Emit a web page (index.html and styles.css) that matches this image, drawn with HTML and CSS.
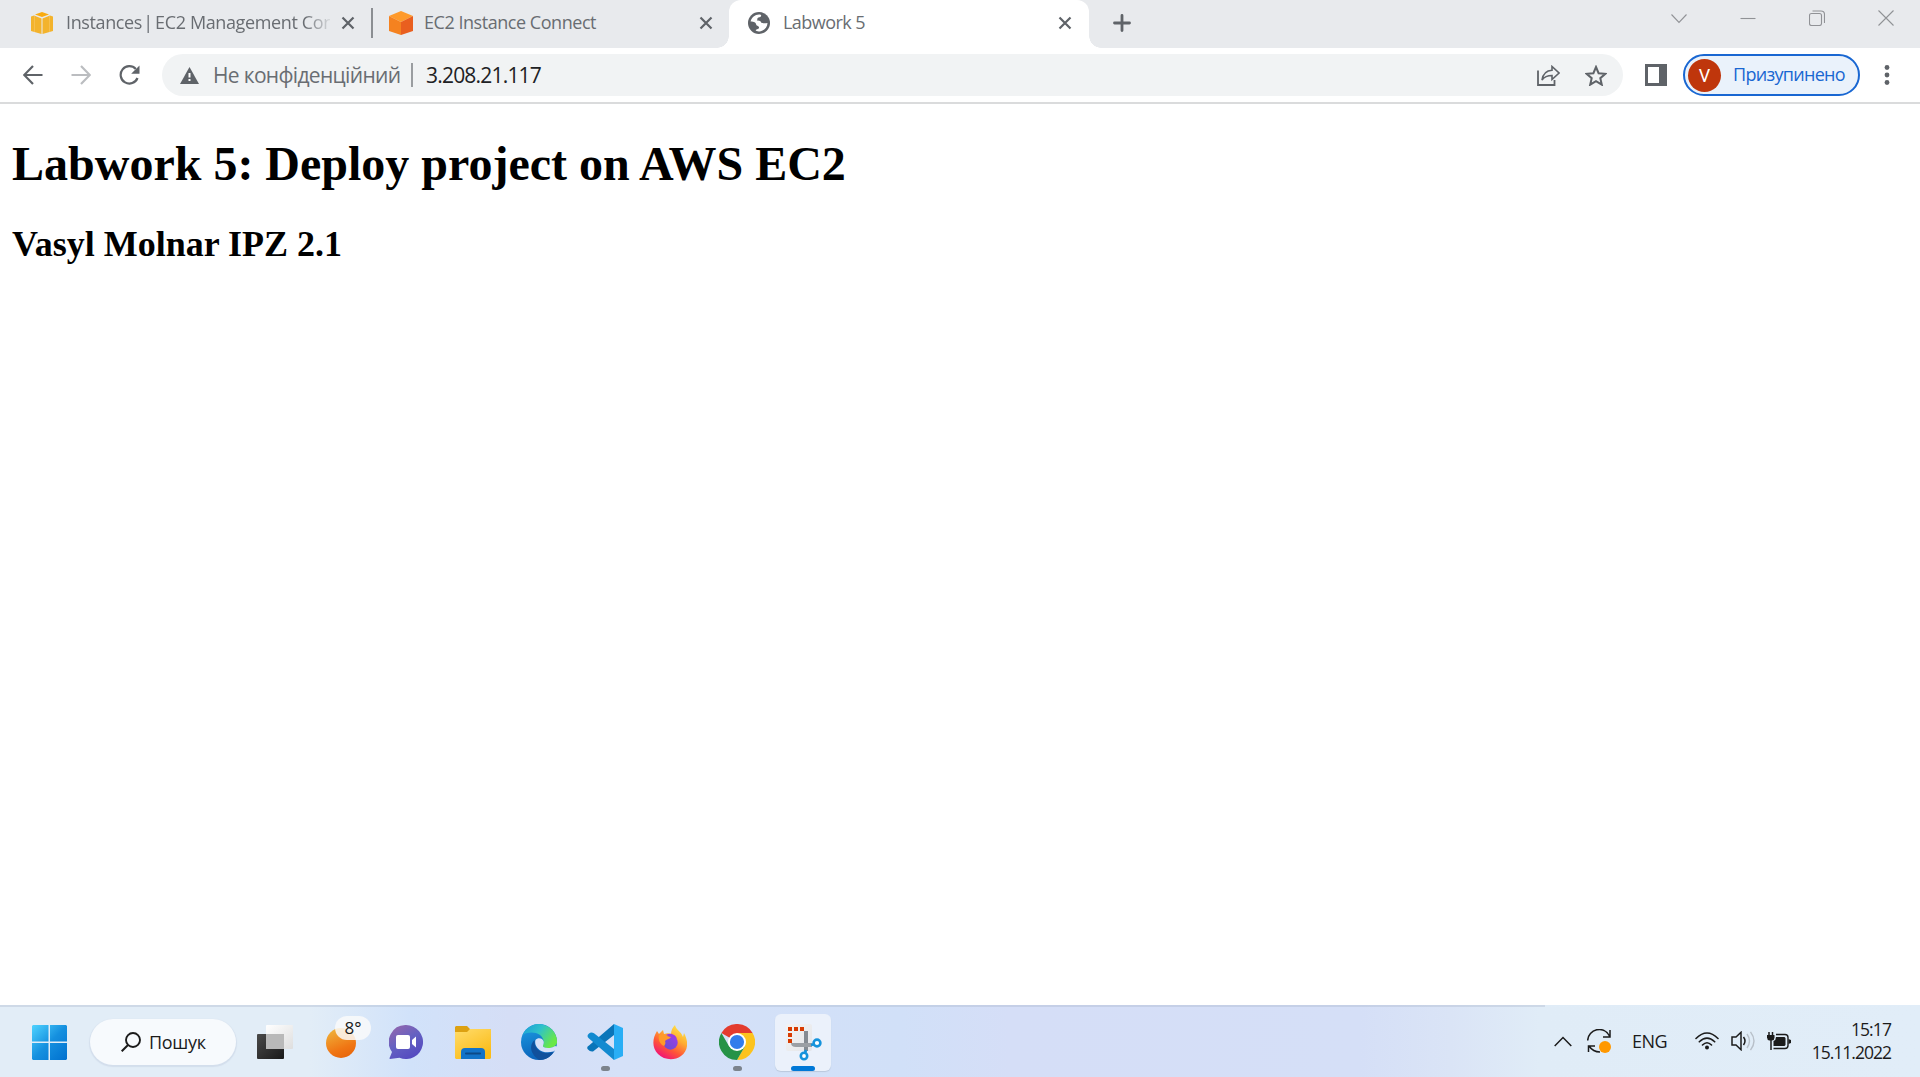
FILE: index.html
```html
<!DOCTYPE html>
<html lang="uk">
<head>
<meta charset="utf-8">
<title>Labwork 5</title>
<link rel="stylesheet" href="styles.css">
</head>
<body>
<div class="screen">
  <header class="tabstrip">
    <div class="tab tab-first">
      <svg class="favicon" width="22" height="22" viewBox="0 0 22 22"><path d="M4 2.500 11 0l7 2.500L11 5z" fill="#f9ab10"/><path d="M0 4.500L3 3.500l7.500 3V22L0 19z" fill="#f3b32c"/><path d="M22 4.500l-3-1-7.500 3V22L22 19z" fill="#f3b32c"/><path d="M3.500 4v16M18.500 4v16" stroke="#f6c257" stroke-width=".8"/></svg>
      <span class="tab-title fade"><span class="t1">Instances <span class="pipe">|</span> EC2 Management Con</span></span>
      <svg class="tab-close" width="14" height="14" viewBox="0 0 14 14"><path d="M1.500 1.500l11 11M12.500 1.500l-11 11"/></svg>
    </div>
    <div class="tab-separator"></div>
    <div class="tab tab-second">
      <svg class="favicon" width="24" height="24" viewBox="0 0 24 24"><path d="M12 0l12 5-12 6L0 5z" fill="#ff9a2b"/><path d="M0 5l12 6v13L0 20z" fill="#f58220"/><path d="M24 5l-12 6v13l12-4z" fill="#e95f1f"/></svg>
      <span class="tab-title"><span class="t2">EC2 Instance Connect</span></span>
      <svg class="tab-close" width="14" height="14" viewBox="0 0 14 14"><path d="M1.500 1.500l11 11M12.500 1.500l-11 11"/></svg>
    </div>
    <div class="tab tab-active">
      <svg class="favicon" width="22" height="22" viewBox="0 0 22 22"><circle cx="11" cy="11" r="11" fill="#5f6368"/><path d="M2.600 9.500C3.500 5.500 7 2.700 11 2.500c2 0 2.500.8 2 1.700-.8 1.200-2.500 1-3.300 1.700-.8.900.2 1.700-.9 2.700 2-.5 4 .2 4.500 2.200 1.500.4 3.500.5 6.200.2-.1 4.300-3.200 8-8 8.400-1.900.1-3.500-.2-3.800-1.100-.2-1 2.800-.8 3.300-2.300.3-1-.6-1.900-1.700-2.300-1.500-.5-1-2.500-2.300-3.300-1.300-.7-2.700-.8-4.400-.9z" fill="#fff"/></svg>
      <span class="tab-title"><span class="t3">Labwork 5</span></span>
      <svg class="tab-close" width="14" height="14" viewBox="0 0 14 14"><path d="M1.500 1.500l11 11M12.500 1.500l-11 11"/></svg>
    </div>
    <svg class="new-tab" width="18" height="18" viewBox="0 0 18 18"><path d="M9 1.500v15M1.500 9h15" stroke="#5f6368" stroke-width="2.800" stroke-linecap="round"/></svg>
    <div class="window-buttons">
      <svg width="16" height="16" viewBox="0 0 16 16"><path d="M.5 4.500l7.500 8 7.500-8"/></svg>
      <svg width="16" height="16" viewBox="0 0 16 16"><path d="M.5 8.500h15"/></svg>
      <svg width="16" height="16" viewBox="0 0 16 16"><rect x=".5" y="3.500" width="12" height="12" rx="2"/><path d="M3.500 1h8.500q3.500 0 3.500 3.500V13"/></svg>
      <svg width="16" height="16" viewBox="0 0 16 16"><path d="M.5.5l15 15M15.500.5l-15 15"/></svg>
    </div>
  </header>

  <nav class="toolbar">
    <div class="nav-buttons">
      <svg width="20" height="20" viewBox="0 0 20 20"><path d="M19.500 10H1.500M10 1L1.200 10l8.800 9" stroke="#5f6368"/></svg>
      <svg width="20" height="20" viewBox="0 0 20 20"><path d="M.5 10h18M10 1l8.800 9-8.800 9" stroke="#bbbdc0"/></svg>
      <svg width="21" height="20" viewBox="0 0 21 20"><path d="M16.800 4A8.700 8.700 0 1 0 18.500 13" stroke="#5f6368"/><path d="M20.500 .5v8.300h-8.300z" fill="#5f6368"/></svg>
    </div>
    <div class="omnibox">
      <svg class="warning" width="19" height="17" viewBox="0 0 19 17"><path d="M9.500 0L19 17H0z" fill="#5f6368"/><path d="M9.500 6v4.500M9.500 12v2" stroke="#fff" stroke-width="2"/></svg>
      <span class="security">Не конфіденційний</span>
      <span class="divider"></span>
      <span class="url">3.208.21.117</span>
      <svg class="share" width="23" height="21" viewBox="0 0 23 21"><path d="M1 5.500V20h16.500v-5" fill="none" stroke="#5f6368" stroke-width="1.800"/><path d="M5 15C6 8.500 9.500 5.500 15 5.200V1.500l7 6.500-7 6.500v-4c-4.500 0-7.500 1-10 4.500z" fill="none" stroke="#5f6368" stroke-width="1.600"/></svg>
      <svg class="star" width="22" height="21" viewBox="0 0 22 21"><path d="M11 2l2.600 6.200 6.700.6-5 4.400 1.500 6.500L11 16.200l-5.800 3.500 1.500-6.500-5-4.400 6.700-.6z" fill="none" stroke="#5f6368" stroke-width="2"/></svg>
    </div>
    <svg class="side-panel" width="22" height="22" viewBox="0 0 22 22"><path d="M0 0h22v22H0zM3 3v16h11V3z" fill="#5f6368" fill-rule="evenodd"/></svg>
    <div class="profile"><span class="avatar">V</span><span class="profile-text">Призупинено</span></div>
    <svg class="menu" width="6" height="22" viewBox="0 0 6 22"><g fill="#5f6368"><circle cx="3" cy="3.500" r="2.400"/><circle cx="3" cy="11" r="2.400"/><circle cx="3" cy="18.500" r="2.400"/></g></svg>
  </nav>

  <main class="page">
    <h1>Labwork 5: Deploy project on AWS EC2</h1>
    <h2>Vasyl Molnar IPZ 2.1</h2>
  </main>

  <footer class="taskbar">
    <svg class="start" width="35" height="35" viewBox="0 0 35 35"><defs><linearGradient id="win" x1="0" y1="0" x2="35" y2="35" gradientUnits="userSpaceOnUse"><stop offset="0" stop-color="#4fd3ff"/><stop offset=".5" stop-color="#1590df"/><stop offset="1" stop-color="#0070cf"/></linearGradient></defs><path d="M1 0h15.500v16.500H0V1zM18 0h16l1 1v15.500H18zM0 18h16.500v17H1l-1-1zM18 18h17v16l-1 1H18z" fill="url(#win)"/></svg>
    <div class="search">
      <svg width="20" height="20" viewBox="0 0 20 20"><circle cx="12" cy="8" r="7" fill="none" stroke="#1b1b1b" stroke-width="1.900"/><path d="M7 13l-6.300 6.300" stroke="#1b1b1b" stroke-width="2"/></svg>
      <span class="search-text">Пошук</span>
    </div>
    <div class="apps">
      <div class="app">
        <svg width="36" height="36" viewBox="0 0 36 36"><defs><linearGradient id="dk" x2="1" y2="1"><stop stop-color="#4a4a4a"/><stop offset="1" stop-color="#191919"/></linearGradient><linearGradient id="lt" x2="1" y2="1"><stop stop-color="#fff"/><stop offset="1" stop-color="#dedede"/></linearGradient></defs><rect y="10" width="27" height="25" rx="1" fill="url(#dk)"/><rect x="9" y="1" width="27" height="24" rx="1" fill="url(#lt)"/><path d="M9 10h18v15H9z" fill="#b9b9b9"/></svg>
      </div>
      <div class="app weather">
        <svg width="30" height="30" viewBox="0 0 30 30"><defs><linearGradient id="sun" x1=".2" y1="0" x2=".6" y2="1"><stop stop-color="#efb43b"/><stop offset=".7" stop-color="#f07614"/><stop offset="1" stop-color="#e8670c"/></linearGradient></defs><circle cx="15" cy="15" r="15" fill="url(#sun)"/></svg>
        <span class="badge">8°</span>
      </div>
      <div class="app chat">
        <svg width="34" height="34" viewBox="0 0 34 34"><defs><linearGradient id="chat" x2=".6" y2="1"><stop stop-color="#9b67aa"/><stop offset=".55" stop-color="#6461c2"/><stop offset="1" stop-color="#554bc0"/></linearGradient></defs><path d="M17 0a17 17 0 1 1-6.500 32.700L1 34q-1-.5 0-2l2-5A17 17 0 0 1 17 0z" fill="url(#chat)"/><rect x="7" y="10" width="14" height="14" rx="2" fill="#fff"/><path d="M23 15l4-3.500v11L23 19z" fill="#fff"/></svg>
      </div>
      <div class="app">
        <svg width="36" height="33" viewBox="0 0 36 33"><defs><linearGradient id="fold" x2=".6" y2="1"><stop stop-color="#ffdc6b"/><stop offset="1" stop-color="#fbbc18"/></linearGradient></defs><path d="M1 0h11l3 3h20l1 1v8H0V1z" fill="#dda111"/><path d="M0 6h12l3-3h20l1 1v28l-1 1H1l-1-1z" fill="url(#fold)"/><path d="M6 33v-7q0-4 4-4h16q4 0 4 4v7z" fill="#1273c8"/><path d="M11 27.500h14" stroke="#0c4a87" stroke-width="2" stroke-linecap="round"/></svg>
      </div>
      <div class="app">
        <svg width="36" height="36" viewBox="0 0 36 36"><defs><linearGradient id="eg" x2="1" y2=".5"><stop stop-color="#1a9bdb"/><stop offset=".5" stop-color="#2fc2c9"/><stop offset="1" stop-color="#69e847"/></linearGradient><linearGradient id="eb" y2="1" x2=".3"><stop stop-color="#1e9fe4"/><stop offset="1" stop-color="#0a62ba"/></linearGradient></defs><circle cx="18" cy="18" r="18" fill="url(#eb)"/><path d="M1.500 11A18 18 0 0 1 36 17c1 6-8 9-13.500 6-2-1.300.8-3 .2-5.500C21.700 9 10 6 1.500 11z" fill="url(#eg)"/><path d="M13.500 16c-7 7-2 16 5 20 6 0 11-3 14-8-6 2.500-15 1-18-6-1-2-.8-4-1-6z" fill="#10509c"/><path d="M22.700 17.500c-.8-3.500-6-4.500-8.200-1.500-2 6 5 15 18 11.500l1.500-1 2.500 0V22.500L34 22c-4 2.500-8.500 2.500-11.500 1-1.500-1.200.8-2.500.2-5.500z" fill="#d6e0f8"/></svg>
      </div>
      <div class="app running">
        <svg width="36" height="36" viewBox="0 0 36 36"><path d="M27 0v11L6 27.500Q3 28 1 25.500t1-4z" fill="#0a75b9"/><path d="M2 14.500Q-1 12 2 9.500q2-2 5-.3L27 25v11z" fill="#128ad0"/><path d="M27 0l9 4v28l-9 4z" fill="#29aef5"/></svg>
      </div>
      <div class="app firefox">
        <svg width="34" height="35" viewBox="0 0 34 35"><defs><linearGradient id="ff" x1=".9" y1="0" x2=".3" y2="1"><stop stop-color="#fff14e"/><stop offset=".4" stop-color="#ffac30"/><stop offset=".7" stop-color="#ff5538"/><stop offset="1" stop-color="#f0107b"/></linearGradient><linearGradient id="fp" x1="1" x2="0" y2="1"><stop stop-color="#a13ce9"/><stop offset="1" stop-color="#6451cd"/></linearGradient></defs><path d="M4 6l2 3 4-4 1 4c3-1 5-1 7 0 0-4 2-7 4-9 1 5 6 6 8 12l1-4c5 9 4 18-3 23-7 5-17 4-23-2-6-6-6-15-1-23z" fill="url(#ff)"/><circle cx="17.500" cy="17.500" r="7.200" fill="url(#fp)"/><path d="M6 10c3-1 6-1 8 1l4 1c-1 2-4 2-6 4 1 2 0 4-1 5-4-2-6-6-5-11z" fill="#ff9a29"/><path d="M13 10c5-3 10 0 11 4-3-2-5-1-6-2z" fill="#9b3be0"/></svg>
      </div>
      <div class="app running">
        <svg width="36" height="36" viewBox="0 0 36 36"><path d="M18 18L2.400 9A18 18 0 0 1 33.600 9z" fill="#e33b2e"/><path d="M18 9h15.600A18 18 0 0 1 18 36l7.800-13.500z" fill="#fcc31e"/><path d="M2.400 9l7.800 13.500Q15 28 25.800 22.500L18 36A18 18 0 0 1 2.400 9z" fill="#269347"/><circle cx="18" cy="18" r="9" fill="#fff"/><circle cx="18" cy="18" r="7.100" fill="#327cec"/></svg>
      </div>
      <div class="app">
        <div class="active-app">
          <svg width="38" height="38" viewBox="0 0 38 38"><defs><linearGradient id="snip" x2="1" y2="1"><stop stop-color="#f4f3f2"/><stop offset="1" stop-color="#e3e5e9"/></linearGradient></defs><rect x="1" y="1" width="26" height="27" rx="2" fill="url(#snip)"/><path d="M3 6h16" stroke="#d83b01" stroke-width="4" stroke-dasharray="4 2"/><path d="M5 10v10" stroke="#d83b01" stroke-width="4" stroke-dasharray="4 2"/><path d="M21 8v20" stroke="#858b92" stroke-width="4"/><path d="M8 20q0 2 3 2h16" stroke="#9b9fa4" stroke-width="4" fill="none"/><g fill="#fff" stroke="#1593dc" stroke-width="2.600"><path d="M26 22l4-1"/><circle cx="32" cy="20" r="3.400"/><path d="M21 27l-1 3"/><circle cx="19" cy="33" r="3.200"/></g></svg>
        </div>
      </div>
    </div>
    <div class="tray">
      <svg class="chevron" width="18" height="11" viewBox="0 0 18 11"><path d="M.7 10L9 1.500l8.300 8.500" fill="none" stroke="#1b1b1b" stroke-width="1.500"/></svg>
      <svg class="sync" width="24" height="24" viewBox="0 0 24 24"><path d="M.7 11.500C1 0 17-4 22.500 7M23 1v7h-7M1.500 23v-6h6.500M2 17c2 3 6 6 11 6" fill="none" stroke="#1b1b1b" stroke-width="1.500"/><circle cx="18" cy="18" r="6" fill="#ff9800"/></svg>
      <span class="lang">ENG</span>
      <svg class="wifi" width="24" height="18" viewBox="0 0 24 18"><g fill="none" stroke="#1b1b1b" stroke-width="1.600" stroke-linecap="round"><path d="M1 6.500q11-11 22 0M4.300 9.800q7.700-7.500 15.400 0M7.500 13q4.500-4.500 9 0"/></g><circle cx="12" cy="15.500" r="2" fill="#1b1b1b"/></svg>
      <svg class="volume" width="24" height="20" viewBox="0 0 24 20"><path d="M1 6h4l5-4.700v17.400L5 14H1z" fill="none" stroke="#1b1b1b" stroke-width="1.500"/><path d="M12.500 6q3 4 0 8" fill="none" stroke="#1b1b1b" stroke-width="1.500"/><path d="M16 3q5 7 0 14M19.500 0.800q7 9.200 0 18.400" fill="none" stroke="#b8c0c9" stroke-width="1.400"/></svg>
      <svg class="battery" width="24" height="18" viewBox="0 0 24 18"><path d="M9 2.500h9q3 0 3 3v8q0 3-3 3H6.500" fill="none" stroke="#1b1b1b" stroke-width="1.400"/><path d="M9 5h8.500l1 1v7l-1 1H6.500V9Q9 8 9 5z" fill="#1b1b1b"/><path d="M21.500 7l2.500 1v3l-2.500 1z" fill="#1b1b1b"/><path d="M2 0v3M5.500 0v3M4 8v10" fill="none" stroke="#1b1b1b" stroke-width="1.500"/><path d="M0 3h7.500v2.500q0 2.500-2.500 3H2.500Q0 8 0 5.500z" fill="#1b1b1b"/></svg>
      <div class="clock"><span>15:17</span><span class="date">15.11.2022</span></div>
    </div>
  </footer>
</div>
</body>
</html>
```
FILE: styles.css
```css
* { box-sizing: border-box; }
body { margin: 0; background: #fff; font-family: "Open Sans", "Noto Sans", sans-serif; }
svg { display: block; flex: none; }
.screen { width: 1920px; height: 1077px; display: flex; flex-direction: column; overflow: hidden; }

/* Tabs */
.tabstrip { height: 48px; background: #e8eaed; display: flex; flex: none; }
.tab { display: flex; align-items: center; height: 45px; font-size: 18px; color: #696d72; white-space: nowrap; }
.tab-title { flex: 1; margin-left: 13px; padding-bottom: 2px; }
.tab-first { width: 355px; margin-left: 16px; padding: 0 0 0 15px; }
.tab-first .tab-title { flex: none; width: 264px; }
.tab-first .tab-close { margin-left: 11px; }
.tab-second { width: 356px; padding: 0 16px 0 16px; }
.tab-second .tab-title { margin-left: 11px; }
.tab-active { position: relative; width: 360px; height: 48px; padding: 0 17px 3px 19px; background: #fff; border-radius: 12px 12px 0 0; }
.tab-active::before, .tab-active::after { content: ""; position: absolute; bottom: 0; width: 12px; height: 12px; }
.tab-active::before { left: -12px; background: radial-gradient(circle at 0 0, #e8eaed 11.500px, #fff 12px); }
.tab-active::after { right: -12px; background: radial-gradient(circle at 100% 0, #e8eaed 11.500px, #fff 12px); }
.tab-close { stroke: #5f6368; stroke-width: 2.200; }
.fade { mask-image: linear-gradient(90deg, #000 238px, transparent 268px); }
.tab-separator { width: 2px; height: 30px; margin-top: 8px; background: #8b8e92; }
.new-tab { margin: 14px 0 0 24px; }
.t1 { letter-spacing: -.38px; }
.pipe { margin: 0 -2px 0 -3px; }
.t2 { letter-spacing: -.46px; }
.t3 { letter-spacing: -.55px; }
.window-buttons { display: flex; gap: 53px; margin: 10px 26px 0 auto; fill: none; stroke: #909296; stroke-width: 1.100; }

/* Toolbar */
.toolbar { height: 56px; flex: none; display: flex; align-items: center; border-bottom: 2px solid #dadbdc; padding-left: 23px; }
.nav-buttons { display: flex; gap: 28px; width: 139px; fill: none; stroke-width: 2.200; }
.omnibox { width: 1461px; height: 42px; border-radius: 21px; background: #f1f3f4; display: flex; align-items: center; padding: 0 16px 0 18px; font-size: 21px; color: #696d72; white-space: nowrap; }
.security { width: 198px; margin-left: 14px; letter-spacing: -.67px; }
.divider { width: 2px; height: 24px; background: #9a9da0; }
.url { margin-left: 13px; color: #202124; letter-spacing: -.8px; }
.share { margin-left: auto; }
.star { margin-left: 25px; }
.side-panel { margin-left: 22px; }
.profile { display: flex; align-items: center; width: 177px; height: 42px; margin-left: 16px; padding-left: 3px; border: 2px solid #1967d2; border-radius: 21px; background: #eaf2fb; color: #1967d2; font-size: 18px; }
.avatar { display: flex; align-items: center; justify-content: center; width: 33px; height: 33px; border-radius: 50%; background: #bf360c; color: #fff; font: 18px Roboto, sans-serif; }
.profile-text { margin-left: 12px; padding-bottom: 2px; letter-spacing: -.7px; }
.menu { margin-left: 24px; }

/* Page content */
.page { flex: 1; padding: 0 12px; font-family: "Liberation Serif", "Times New Roman", serif; color: #000; }
.page h1 { margin: 32px 0; font-size: 48px; line-height: 55px; }
.page h2 { margin: 0; font-size: 36px; line-height: 42px; }

/* Taskbar */
.taskbar { position: relative; height: 72px; flex: none; display: flex; align-items: center; padding-left: 32px; color: #1b1b1b;
  background: linear-gradient(90deg, #e2edf7 0, #e2edf7 310px, #d1e2fa 410px, #d5def6 510px, #d5e1f8 620px, #d1e0f8 900px, #d5def7 1010px, #d5dff7 1360px, #dae4f6 1450px, #e0ecf7 1540px, #e1edf8 1920px); }
.taskbar::before { content: ""; position: absolute; left: 0; top: 0; width: 1545px; height: 2px; background: rgba(170, 180, 200, .35); }
.start { margin-top: 3px; }
.search { display: flex; align-items: center; width: 146px; height: 46px; margin: 2px 6px 0 23px; padding-left: 31px; border-radius: 23px; background: #f7fafd; box-shadow: 0 1px 1px 1px #d3deec; font-size: 18px; }
.search-text { margin-left: 8px; letter-spacing: -.3px; }
.apps { display: flex; height: 72px; }
.app { position: relative; width: 66px; height: 72px; padding-top: 2px; display: flex; align-items: center; justify-content: center; }
.chat, .firefox { padding-right: 2px; }
.running::after, .active-app::after { content: ""; position: absolute; bottom: 6px; left: 29px; width: 9px; height: 5px; border-radius: 3px; background: #7c838c; }
.weather { padding-top: 3px; }
.badge { position: absolute; left: 27px; top: 11px; width: 36px; height: 24px; border-radius: 12px; background: rgba(250, 250, 250, .84); font-size: 17px; line-height: 24px; text-align: center; }
.active-app { position: absolute; left: 5px; top: 9px; width: 56px; height: 57px; border-radius: 6px; background: #ebf1fb; box-shadow: 0 1px 1px #bac8dc; padding: 9px 0 0 10px; }
.active-app::after { left: 16px; bottom: 0; width: 24px; background: #0078d7; }
.tray { display: flex; align-items: center; height: 72px; margin-left: auto; padding-right: 29px; }
.sync { margin-left: 15px; }
.lang { width: 40px; margin-left: 21px; font-size: 18px; letter-spacing: -.5px; }
.wifi { margin-left: 23px; }
.volume { margin-left: 12px; }
.battery { margin-left: 12px; }
.clock { width: 100px; display: flex; flex-direction: column; align-items: flex-end; font-size: 17.500px; line-height: 23px; letter-spacing: -.9px; }
.date { white-space: nowrap; letter-spacing: -1px; }
```
